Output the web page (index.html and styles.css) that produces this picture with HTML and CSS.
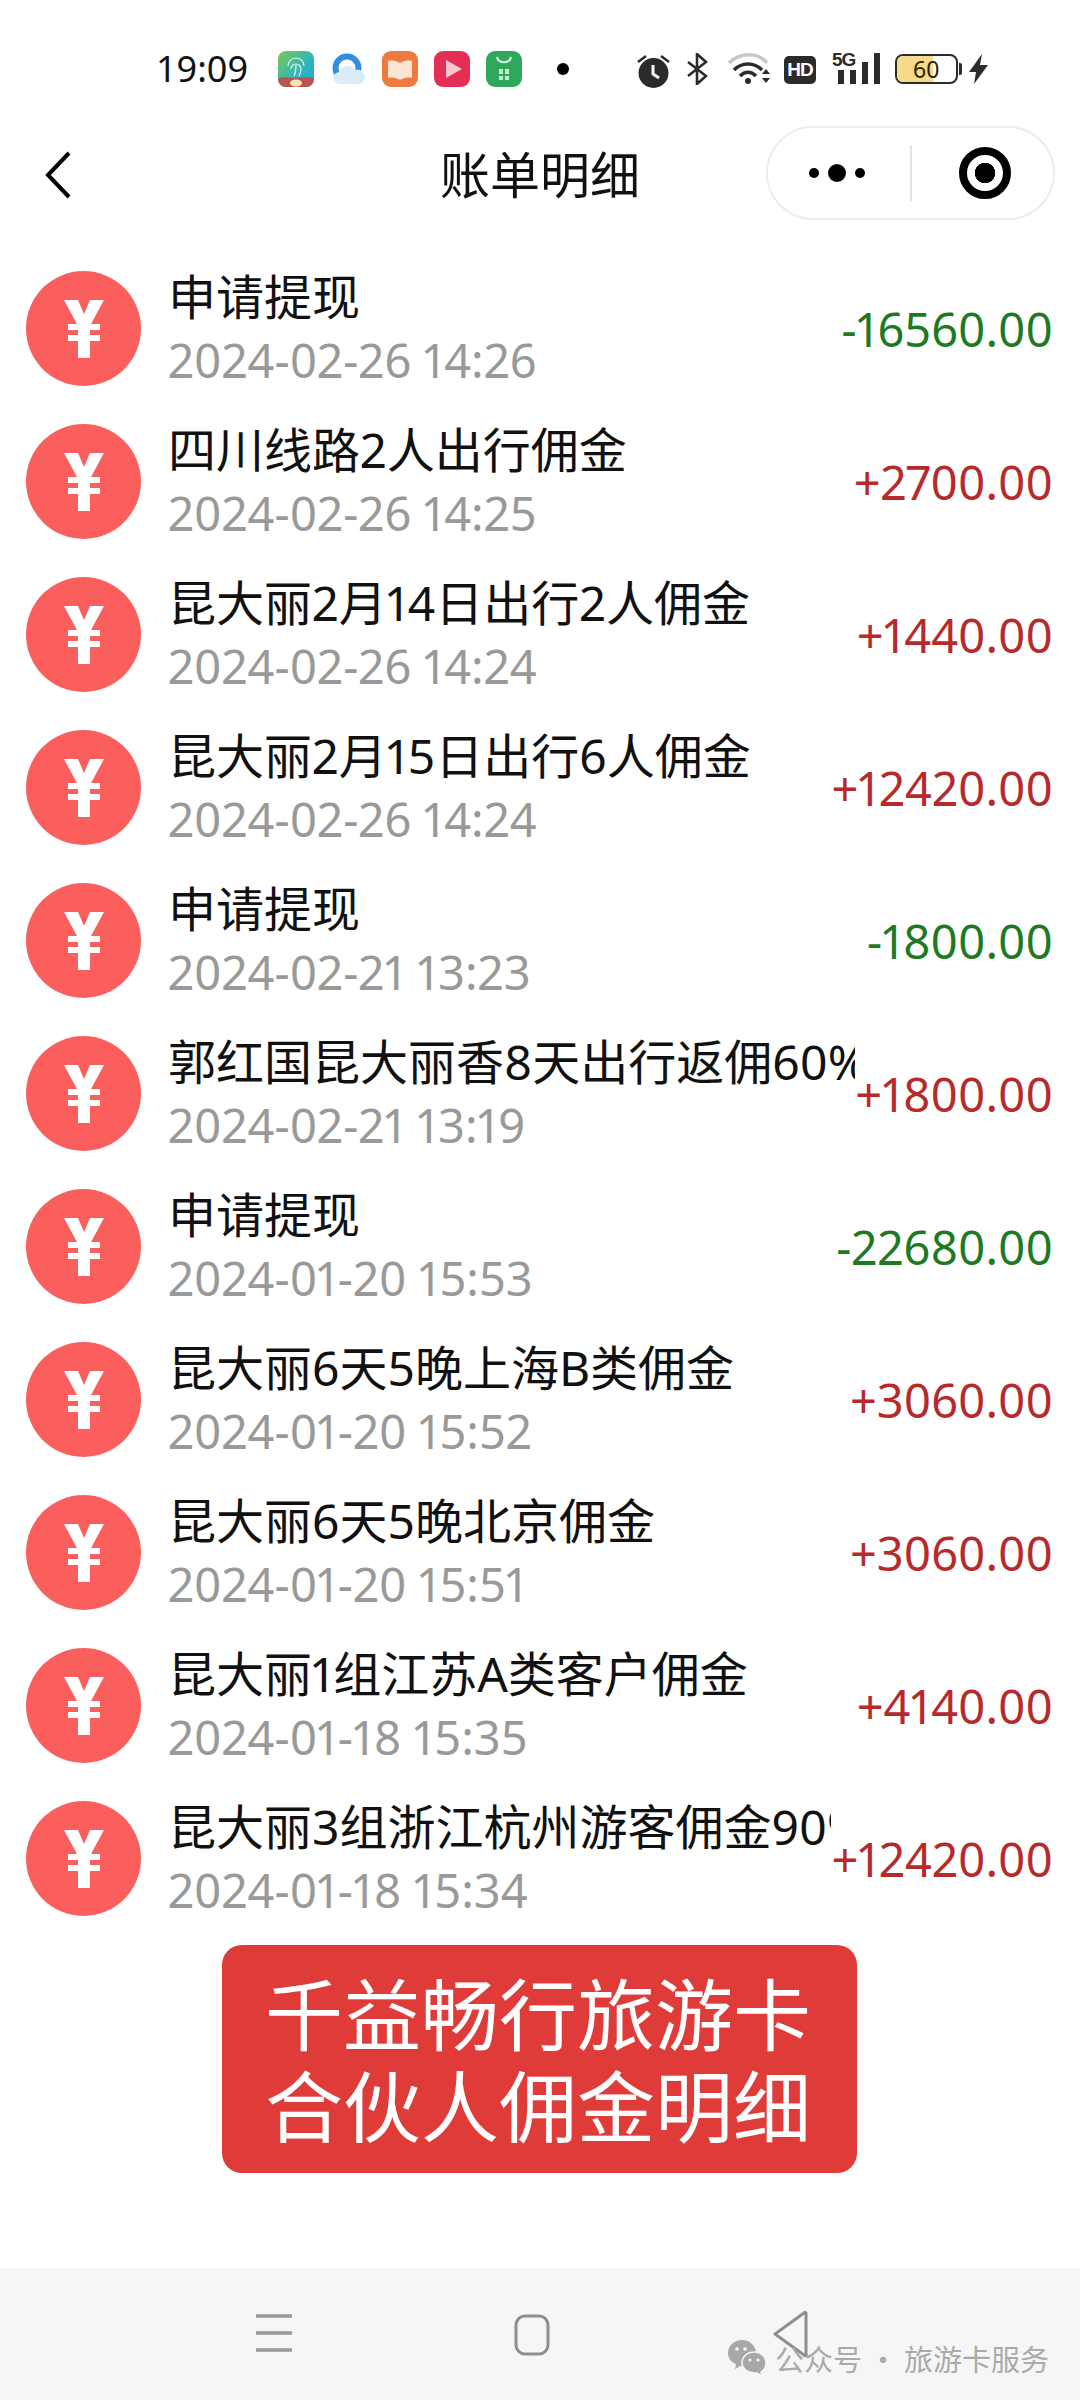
FILE: index.html
```html
<!DOCTYPE html>
<html lang="zh-CN">
<head>
<meta charset="utf-8">
<title>账单明细</title>
<link rel="stylesheet" href="styles.css">
</head>
<body>
<svg class="defs" width="0" height="0" aria-hidden="true">
  <symbol id="yen" viewBox="0 0 40 58">
    <path d="M0 0h14l6 14 6-14h14L27 24h9v6H26v5h10v6H26v17H14V41H4v-6h10v-5H4v-6h9z" fill="#fff"/>
  </symbol>
</svg>
<div class="page">
  <header class="status">
    <span class="time">19:09</span>
    <div class="apps">
      <svg class="app" viewBox="0 0 36 36"><defs><linearGradient id="g1" x1="0" y1="0" x2="1" y2="1"><stop offset="0" stop-color="#7cc94e"/><stop offset=".6" stop-color="#2bb5c2"/><stop offset="1" stop-color="#25a9d6"/></linearGradient></defs><rect width="36" height="36" rx="8" fill="url(#g1)"/><path d="M10 15a8 8 0 0 1 16 0M13 18a5 5 0 0 1 10 0c0 3-1 5-2 7M18 14c0 4 0 7-2 11" fill="none" stroke="#e6f7ef" stroke-width="1.2"/><path d="M0 28c6-3 10-1 18-1s12-2 18 1v0a8 8 0 0 1-8 8H8a8 8 0 0 1-8-8z" fill="#b9544c"/><ellipse cx="18" cy="32" rx="6" ry="3.5" fill="#f3e6b5"/></svg>
      <svg class="app" viewBox="0 0 36 36"><circle cx="17" cy="17" r="11.500" fill="none" stroke="#2f8fe0" stroke-width="6"/><path d="M10 33a6 6 0 0 1-1-12 9 9 0 0 1 16-2 6 6 0 0 1 5 14z" fill="#dcebf8"/></svg>
      <svg class="app" viewBox="0 0 36 36"><rect width="36" height="36" rx="9" fill="#ee7a40"/><path d="M6 10c5-1 9 0 12 2 3-2 7-3 12-2v17c-5-1-9 0-12 2-3-2-7-3-12-2z" fill="#fbe6d6"/></svg>
      <svg class="app" viewBox="0 0 36 36"><rect width="36" height="36" rx="9" fill="#e52e55"/><path d="M12 9l16 9-16 9z" fill="#fbc6d0"/></svg>
      <svg class="app" viewBox="0 0 36 36"><rect width="36" height="36" rx="9" fill="#2fa85c"/><path d="M11 6c1 7 13 7 14 0" fill="none" stroke="#d9f3e2" stroke-width="2.200"/><path d="M13 18h4v5h-4zM19 18h4v5h-4zM13 25h4v4h-4zM19 25h4v4h-4z" fill="#c6ecd4"/></svg>
    </div>
    <span class="dot"></span>
    <div class="sys">
      <svg class="i-alarm" viewBox="0 0 33 33"><circle cx="16.500" cy="18" r="15" fill="#2b2b2b"/><path d="M16 10v9l6 4" fill="none" stroke="#fff" stroke-width="3"/><path d="M1 7l8-6M32 7l-8-6" stroke="#2b2b2b" stroke-width="2.500"/></svg>
      <svg class="i-bt" viewBox="0 0 21 32"><path d="M1 9l18 14-9 8V1l9 8L1 23" fill="none" stroke="#2b2b2b" stroke-width="2.600"/></svg>
      <svg class="i-wifi" viewBox="0 0 44 33"><path d="M1 11C12 0 30 0 39 11" fill="none" stroke="#c8c8c8" stroke-width="3.500"/><path d="M6 18c8-8 20-8 28 0M12 24c5-5 11-5 16 0" fill="none" stroke="#2b2b2b" stroke-width="3.500"/><circle cx="20" cy="29" r="3" fill="#2b2b2b"/><path d="M34 22l4-5 4 5zM34 26l4 5 4-5z" fill="#2b2b2b"/></svg>
      <span class="hd">HD</span>
      <div class="net">
        <span class="fiveg">5G</span>
        <svg class="i-bars" viewBox="0 0 46 32"><path d="M4 18h6v14H4zM16 18h6v14h-6zM28 10h6v22h-6zM40 1h6v31h-6z" fill="#2b2b2b"/></svg>
      </div>
      <div class="battery"><span class="level"></span><span class="pct">60</span></div>
      <span class="nub"></span>
      <svg class="i-bolt" viewBox="0 0 19 30"><path d="M13 0L0 18h7l-2 12L19 11h-8z" fill="#2b2b2b"/></svg>
    </div>
  </header>

  <nav class="nav">
    <svg class="back" viewBox="0 0 26 48"><path d="M24 2L3 24l21 22" fill="none" stroke="#000" stroke-width="4"/></svg>
    <h1 class="nav-title">账单明细</h1>
    <div class="capsule">
      <div class="more"><i></i><b></b><i></i></div>
      <span class="sep"></span>
      <div class="target"><span></span></div>
    </div>
  </nav>

  <ul class="list">
    <li class="row"><span class="badge"><svg class="yen"><use href="#yen"/></svg></span><div class="info"><div class="name">申请提现</div><div class="date">2024-02-26 14:26</div></div><div class="amt out">-16560.00</div></li>
    <li class="row"><span class="badge"><svg class="yen"><use href="#yen"/></svg></span><div class="info"><div class="name">四川线路2人出行佣金</div><div class="date">2024-02-26 14:25</div></div><div class="amt in">+2700.00</div></li>
    <li class="row"><span class="badge"><svg class="yen"><use href="#yen"/></svg></span><div class="info"><div class="name">昆大丽2月14日出行2人佣金</div><div class="date">2024-02-26 14:24</div></div><div class="amt in">+1440.00</div></li>
    <li class="row"><span class="badge"><svg class="yen"><use href="#yen"/></svg></span><div class="info"><div class="name">昆大丽2月15日出行6人佣金</div><div class="date">2024-02-26 14:24</div></div><div class="amt in">+12420.00</div></li>
    <li class="row"><span class="badge"><svg class="yen"><use href="#yen"/></svg></span><div class="info"><div class="name">申请提现</div><div class="date">2024-02-21 13:23</div></div><div class="amt out">-1800.00</div></li>
    <li class="row"><span class="badge"><svg class="yen"><use href="#yen"/></svg></span><div class="info"><div class="name">郭红国昆大丽香8天出行返佣60%</div><div class="date">2024-02-21 13:19</div></div><div class="amt in">+1800.00</div></li>
    <li class="row"><span class="badge"><svg class="yen"><use href="#yen"/></svg></span><div class="info"><div class="name">申请提现</div><div class="date">2024-01-20 15:53</div></div><div class="amt out">-22680.00</div></li>
    <li class="row"><span class="badge"><svg class="yen"><use href="#yen"/></svg></span><div class="info"><div class="name">昆大丽6天5晚上海B类佣金</div><div class="date">2024-01-20 15:52</div></div><div class="amt in">+3060.00</div></li>
    <li class="row"><span class="badge"><svg class="yen"><use href="#yen"/></svg></span><div class="info"><div class="name">昆大丽6天5晚北京佣金</div><div class="date">2024-01-20 15:51</div></div><div class="amt in">+3060.00</div></li>
    <li class="row"><span class="badge"><svg class="yen"><use href="#yen"/></svg></span><div class="info"><div class="name">昆大丽1组江苏A类客户佣金</div><div class="date">2024-01-18 15:35</div></div><div class="amt in">+4140.00</div></li>
    <li class="row"><span class="badge"><svg class="yen"><use href="#yen"/></svg></span><div class="info"><div class="name">昆大丽3组浙江杭州游客佣金90%</div><div class="date">2024-01-18 15:34</div></div><div class="amt in">+12420.00</div></li>
  </ul>

  <div class="banner"><span>千益畅行旅游卡</span><span>合伙人佣金明细</span></div>

  <footer class="tabbar">
    <svg class="t-menu" viewBox="0 0 36 38"><path d="M0 2h36M0 19h36M0 36h36" stroke="#999" stroke-width="3.500"/></svg>
    <svg class="t-home" viewBox="0 0 36 42"><rect x="2" y="2" width="32" height="38" rx="9" fill="none" stroke="#8f8f8f" stroke-width="3"/></svg>
    <svg class="t-back" viewBox="0 0 36 48"><path d="M32 3L3 24l29 21a1 1 0 0 0 2-1V4a1 1 0 0 0-2-1z" fill="none" stroke="#8f8f8f" stroke-width="3" stroke-linejoin="round"/></svg>
    <div class="mark">
      <svg class="wechat" viewBox="0 0 40 36"><path d="M15 0c8 0 14 6 14 13 0 7-6 13-14 13h-2l-5 3 1-5C4 22 1 18 1 13 1 6 7 0 15 0z" fill="#a8a8a8"/><path d="M27 12c7 0 12 5 12 11 0 4-2 7-5 9l1 4-5-3h-3c-7 0-12-5-12-10 0-6 5-11 12-11z" fill="#a8a8a8" stroke="#f6f6f6" stroke-width="1.500"/><circle cx="10" cy="9" r="1.800" fill="#f6f6f6"/><circle cx="18" cy="9" r="1.800" fill="#f6f6f6"/><circle cx="23" cy="20" r="1.600" fill="#f6f6f6"/><circle cx="31" cy="20" r="1.600" fill="#f6f6f6"/></svg>
      <span>公众号 · 旅游卡服务</span>
    </div>
  </footer>
</div>
</body>
</html>
```
FILE: styles.css
```css
* { box-sizing: border-box; }
html, body { margin: 0; padding: 0; background: #fff; }
body { font-family: "Noto Sans", "Noto Sans CJK SC", sans-serif; color: #000; }
.defs { position: absolute; }
.page { width: 1080px; height: 2400px; display: flex; flex-direction: column; overflow: hidden; }

/* status bar */
.status { height: 120px; padding: 49px 0 0 156px; display: flex; align-items: flex-start; }
.time { font-size: 36px; line-height: 40px; width: 92px; color: #111; }
.apps { display: flex; gap: 16px; margin-left: 30px; margin-top: 2px; }
.app { width: 36px; height: 36px; display: block; }
.dot { width: 12px; height: 12px; border-radius: 50%; background: #000; margin: 14px 0 0 35px; }
.sys { display: flex; align-items: flex-start; margin-left: 68px; margin-top: 3px; }
.i-alarm { width: 33px; height: 33px; margin-top: 3px; }
.i-bt { width: 21px; height: 32px; margin: 1px 0 0 17px; }
.i-wifi { width: 44px; height: 33px; margin-left: 20px; }
.hd { width: 32px; height: 28px; margin: 4px 0 0 12px; border-radius: 5px; background: #2b2b2b; color: #fff; font: bold 19px/28px "Liberation Sans", sans-serif; text-align: center; letter-spacing: -1px; }
.net { position: relative; width: 48px; height: 32px; margin-left: 16px; }
.fiveg { position: absolute; left: 0; top: -2px; font: bold 19px/20px "Liberation Sans", sans-serif; color: #2b2b2b; letter-spacing: -1px; }
.i-bars { width: 46px; height: 32px; display: block; margin-left: 2px; }
.battery { position: relative; width: 63px; height: 30px; margin: 2px 0 0 15px; border: 2.500px solid #2b2b2b; border-radius: 8px; overflow: hidden; }
.level { display: block; width: 36px; height: 100%; background: #f7da8a; }
.pct { position: absolute; left: 16px; top: -1px; font-size: 23px; line-height: 28px; color: #2b2000; }
.nub { width: 3px; height: 12px; margin: 11px 0 0 1px; background: #2b2b2b; border-radius: 0 2px 2px 0; }
.i-bolt { width: 19px; height: 30px; margin: 2px 0 0 7px; }

/* navigation */
.nav { position: relative; height: 108px; display: flex; align-items: center; justify-content: center; }
.back { position: absolute; left: 45px; top: 31px; width: 26px; height: 48px; }
.nav-title { margin: 0; font: 400 50px/60px "Noto Sans CJK SC", sans-serif; color: #111; position: relative; top: -2px; }
.capsule { position: absolute; right: 25px; top: 6px; width: 289px; height: 94px; border: 2px solid #ececec; border-radius: 47px; display: flex; align-items: center; }
.more { width: 142px; display: flex; align-items: center; justify-content: center; gap: 9px; padding-right: 4px; }
.more i { width: 10px; height: 10px; border-radius: 50%; background: #000; }
.more b { width: 18px; height: 18px; border-radius: 50%; background: #000; }
.sep { width: 2px; height: 56px; background: #e2e2e2; }
.target { flex: 1; display: flex; justify-content: center; padding-left: 4px; }
.target span { width: 52px; height: 52px; border: 8px solid #000; border-radius: 50%; background: radial-gradient(circle, #000 0 10px, #fff 10.500px); }

/* list */
.list { list-style: none; margin: 0; padding: 24px 27px 0 26px; }
.row { height: 153px; display: flex; align-items: center; }
.badge { width: 115px; height: 115px; flex: none; border-radius: 50%; background: #fb5f5d; display: flex; align-items: center; justify-content: center; margin-right: 27px; }
.yen { width: 40px; height: 58px; display: block; }
.info { flex: 1; min-width: 0; overflow: hidden; padding: 10px 0; margin: -10px 0; white-space: nowrap; }
.name { font: 400 48px/62px "Noto Sans", "Noto Sans CJK SC", sans-serif; font-variant-numeric: proportional-nums; color: #111; height: 62px; margin: -2px 0 2px; }
.date { font-size: 47px; line-height: 60px; font-variant-numeric: proportional-nums; color: #999; }
.amt { flex: none; font-size: 47px; line-height: 60px; font-variant-numeric: proportional-nums; }
.amt.in { color: #b72a2c; }
.amt.out { color: #1d7a22; }

/* banner */
.banner { width: 635px; height: 228px; margin: 10px 0 0 222px; padding: 0 3px 4px 0; border-radius: 20px; background: #de3b39; color: #fff; display: flex; flex-direction: column; align-items: center; justify-content: center; font: 400 78px/92px "Noto Sans CJK SC", sans-serif; }

/* bottom bar */
.tabbar { position: relative; margin-top: auto; height: 132px; background: #f6f6f6; display: flex; align-items: flex-start; padding: 46px 0 0 256px; }
.t-menu { width: 36px; height: 38px; }
.t-home { width: 36px; height: 42px; margin-left: 222px; }
.t-back { width: 36px; height: 48px; margin-left: 222px; margin-top: -4px; }
.mark { position: absolute; left: 727px; top: 72px; display: flex; align-items: center; gap: 8px; font: 400 29px/36px "Noto Sans CJK SC", sans-serif; color: #aaa; }
.wechat { width: 40px; height: 36px; }
```
